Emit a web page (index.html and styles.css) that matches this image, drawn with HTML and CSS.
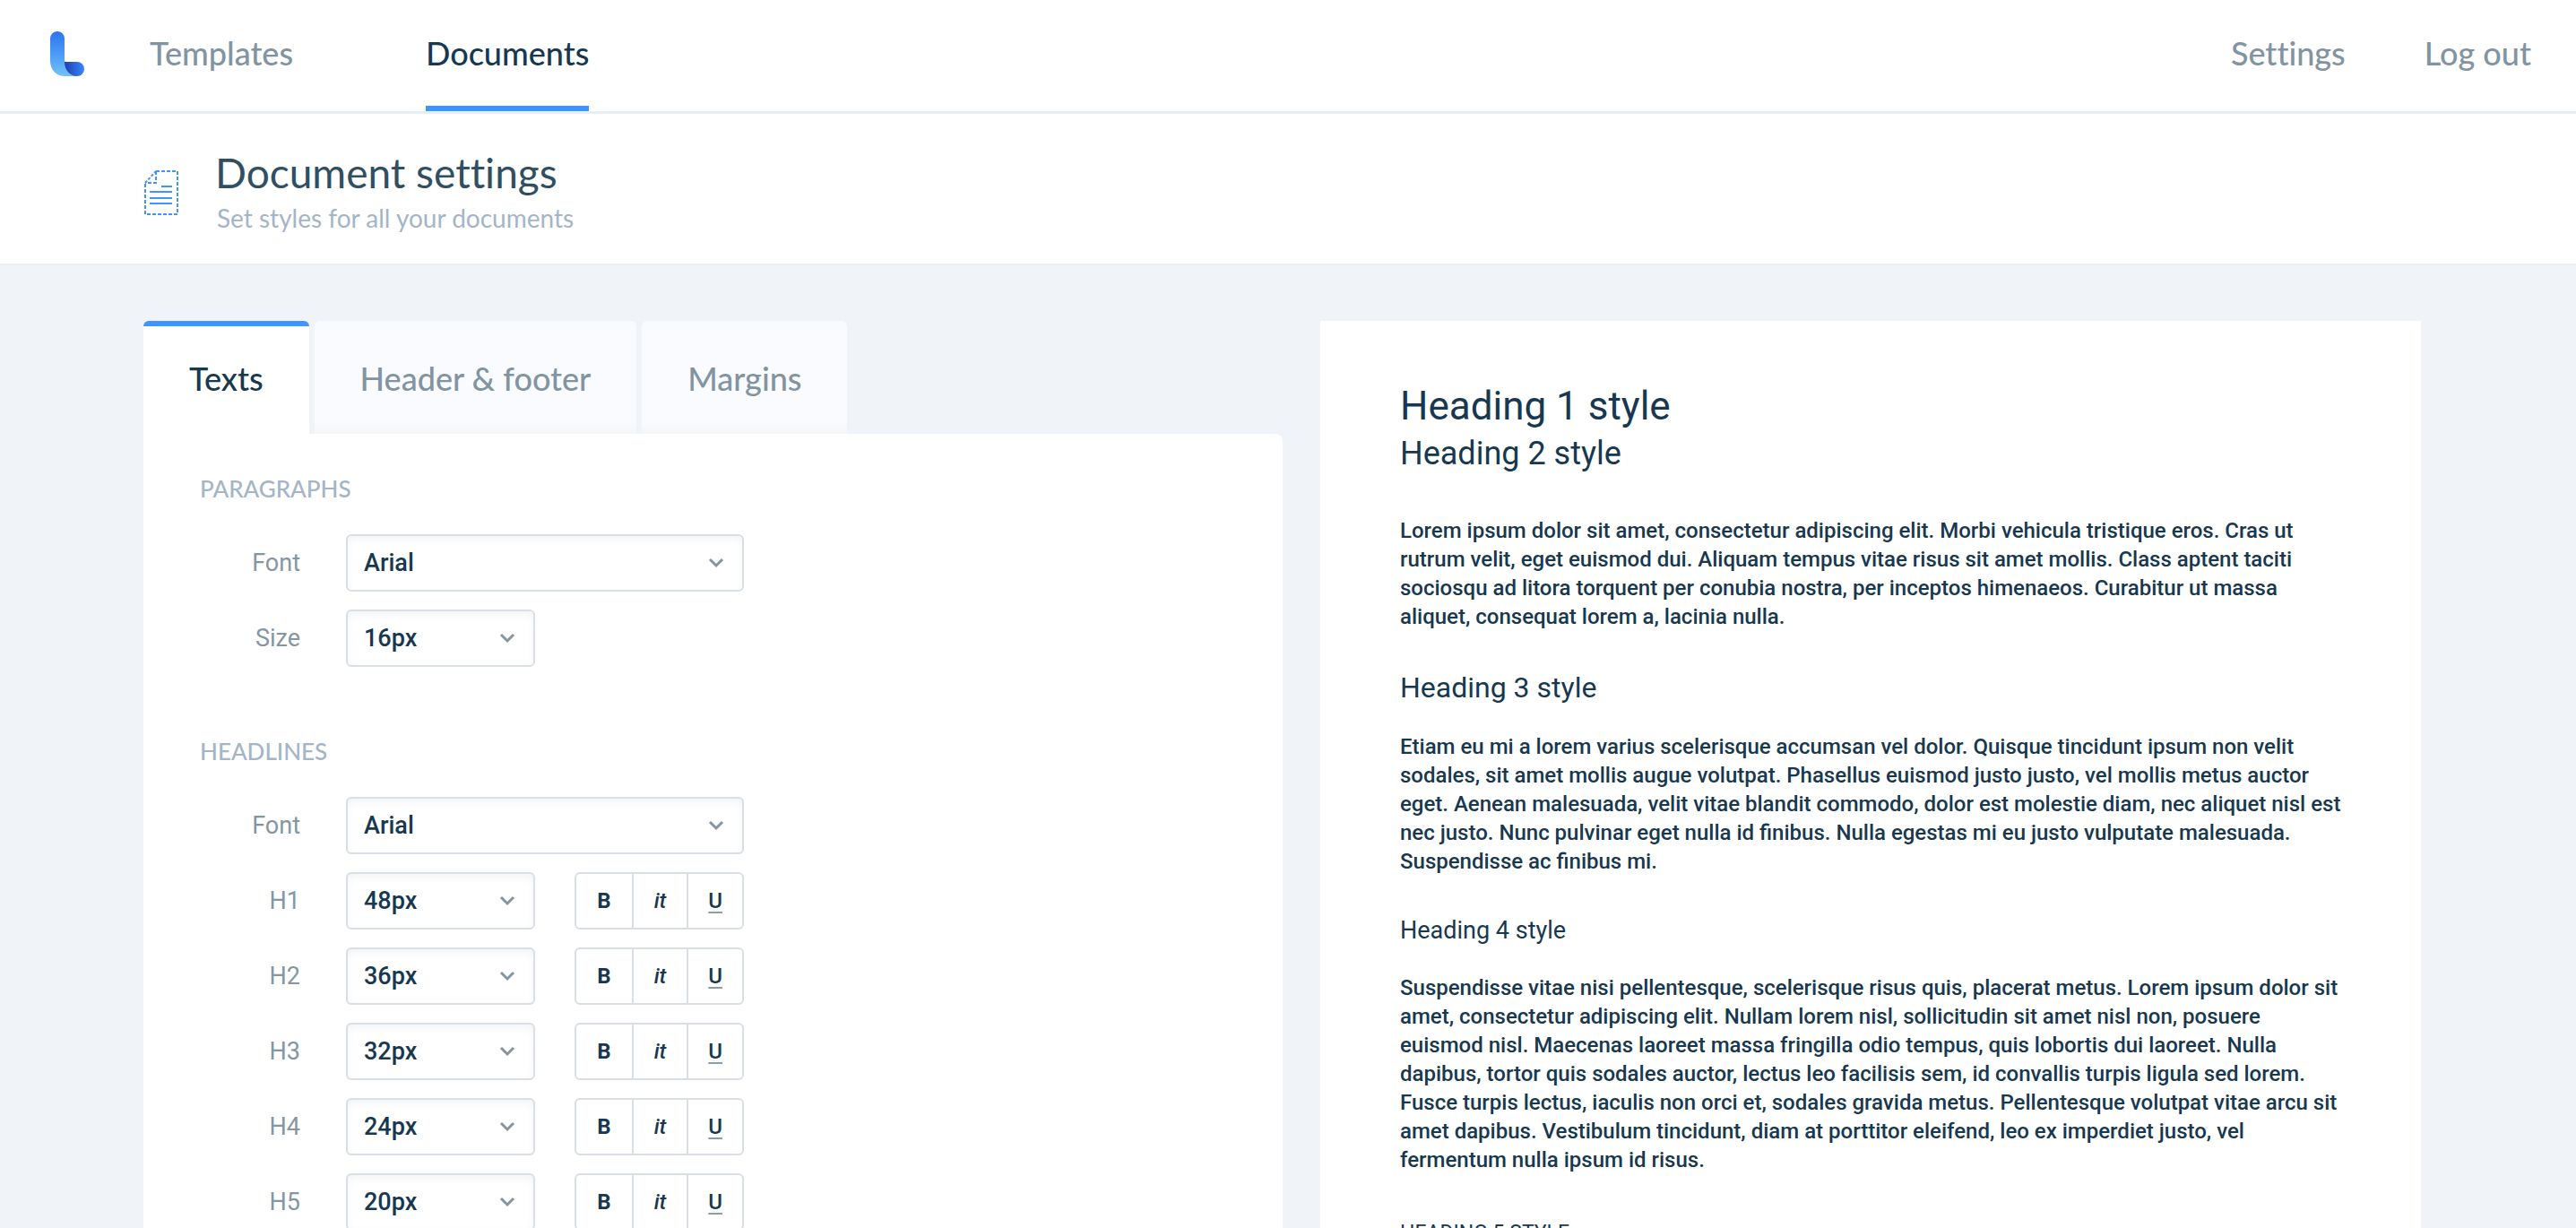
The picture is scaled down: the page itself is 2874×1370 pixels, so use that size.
FILE: index.html
```html
<!DOCTYPE html>
<html lang="en">
<head>
<meta charset="utf-8">
<title>Document settings</title>
<link rel="stylesheet" href="styles.css">
</head>
<body>
<div class="app">
  <header class="topbar">
    <a class="logo" href="#" aria-label="Home">
      <svg width="40" height="52" viewBox="0 0 40 52" aria-hidden="true">
        <defs>
          <linearGradient id="stem" x1="0" y1="0" x2="0" y2="1">
            <stop offset="0" stop-color="#2f74ec"/>
            <stop offset=".55" stop-color="#4e9ef8"/>
            <stop offset="1" stop-color="#74c2f6"/>
          </linearGradient>
          <linearGradient id="foot" x1="0" y1="0" x2="1" y2="0">
            <stop offset="0" stop-color="#1a3fb4"/>
            <stop offset="1" stop-color="#3b86f7"/>
          </linearGradient>
        </defs>
        <path d="M1 9a8 8 0 0 1 16 0v25l14 17H17C8 51 1 44 1 34z" fill="url(#stem)"/>
        <path d="M17 35h14a8 8 0 0 1 0 16c-8 0-14-7-14-16z" fill="url(#foot)"/>
      </svg>
    </a>
    <nav class="nav">
      <a class="nav-link" href="#">Templates</a>
      <a class="nav-link active" href="#" aria-current="page">Documents</a>
    </nav>
    <nav class="nav account">
      <a class="nav-link" href="#">Settings</a>
      <a class="nav-link" href="#">Log out</a>
    </nav>
  </header>

  <section class="page-head">
    <svg class="page-icon" width="40" height="52" viewBox="0 0 40 52" fill="none" stroke="#3f96fa" stroke-width="2" aria-hidden="true">
      <path d="M14 2h24v48H2V15" stroke-dasharray="4 2"/>
      <path d="M2 15L14 2" stroke-dasharray="3 2"/>
      <path d="M14 2v13H2" stroke-dasharray="4 2"/>
      <path d="M20 19h12M7 25h25M7 32h25M7 38h25"/>
    </svg>
    <div>
      <h1 class="page-title">Document settings</h1>
      <p class="page-sub">Set styles for all your documents</p>
    </div>
  </section>

  <main class="content">
    <section class="editor">
      <div class="tabs" role="tablist">
        <button class="tab active" type="button" role="tab" aria-selected="true">Texts</button>
        <button class="tab" type="button" role="tab" aria-selected="false">Header &amp; footer</button>
        <button class="tab" type="button" role="tab" aria-selected="false">Margins</button>
      </div>
      <form class="panel">
        <h2 class="group-title">Paragraphs</h2>
        <div class="rows">
          <div class="row">
            <label class="label" for="p-font">Font</label>
            <div class="field wide"><select id="p-font" class="select"><option>Arial</option></select><svg class="chevron" viewBox="0 0 18 12"><path d="M2 2l7 7 7-7"/></svg></div>
          </div>
          <div class="row">
            <label class="label" for="p-size">Size</label>
            <div class="field"><select id="p-size" class="select"><option>16px</option></select><svg class="chevron" viewBox="0 0 18 12"><path d="M2 2l7 7 7-7"/></svg></div>
          </div>
        </div>
        <h2 class="group-title">Headlines</h2>
        <div class="rows">
          <div class="row">
            <label class="label" for="h-font">Font</label>
            <div class="field wide"><select id="h-font" class="select"><option>Arial</option></select><svg class="chevron" viewBox="0 0 18 12"><path d="M2 2l7 7 7-7"/></svg></div>
          </div>
          <div class="row">
            <label class="label" for="h1-size">H1</label>
            <div class="field"><select id="h1-size" class="select"><option>48px</option></select><svg class="chevron" viewBox="0 0 18 12"><path d="M2 2l7 7 7-7"/></svg></div>
            <div class="styles"><button type="button" class="bold">B</button><button type="button" class="italic">it</button><button type="button" class="underline">U</button></div>
          </div>
          <div class="row">
            <label class="label" for="h2-size">H2</label>
            <div class="field"><select id="h2-size" class="select"><option>36px</option></select><svg class="chevron" viewBox="0 0 18 12"><path d="M2 2l7 7 7-7"/></svg></div>
            <div class="styles"><button type="button" class="bold">B</button><button type="button" class="italic">it</button><button type="button" class="underline">U</button></div>
          </div>
          <div class="row">
            <label class="label" for="h3-size">H3</label>
            <div class="field"><select id="h3-size" class="select"><option>32px</option></select><svg class="chevron" viewBox="0 0 18 12"><path d="M2 2l7 7 7-7"/></svg></div>
            <div class="styles"><button type="button" class="bold">B</button><button type="button" class="italic">it</button><button type="button" class="underline">U</button></div>
          </div>
          <div class="row">
            <label class="label" for="h4-size">H4</label>
            <div class="field"><select id="h4-size" class="select"><option>24px</option></select><svg class="chevron" viewBox="0 0 18 12"><path d="M2 2l7 7 7-7"/></svg></div>
            <div class="styles"><button type="button" class="bold">B</button><button type="button" class="italic">it</button><button type="button" class="underline">U</button></div>
          </div>
          <div class="row">
            <label class="label" for="h5-size">H5</label>
            <div class="field"><select id="h5-size" class="select"><option>20px</option></select><svg class="chevron" viewBox="0 0 18 12"><path d="M2 2l7 7 7-7"/></svg></div>
            <div class="styles"><button type="button" class="bold">B</button><button type="button" class="italic">it</button><button type="button" class="underline">U</button></div>
          </div>
        </div>
      </form>
    </section>

    <article class="preview">
      <h1>Heading 1 style</h1>
      <h2>Heading 2 style</h2>
      <p>Lorem ipsum dolor sit amet, consectetur adipiscing elit. Morbi vehicula tristique eros. Cras ut rutrum velit, eget euismod dui. Aliquam tempus vitae risus sit amet mollis. Class aptent taciti sociosqu ad litora torquent per conubia nostra, per inceptos himenaeos. Curabitur ut massa aliquet, consequat lorem a, lacinia nulla.</p>
      <h3>Heading 3 style</h3>
      <p>Etiam eu mi a lorem varius scelerisque accumsan vel dolor. Quisque tincidunt ipsum non velit sodales, sit amet mollis augue volutpat. Phasellus euismod justo justo, vel mollis metus auctor eget. Aenean malesuada, velit vitae blandit commodo, dolor est molestie diam, nec aliquet nisl est nec justo. Nunc pulvinar eget nulla id finibus. Nulla egestas mi eu justo vulputate malesuada. Suspendisse ac finibus mi.</p>
      <h4>Heading 4 style</h4>
      <p>Suspendisse vitae nisi pellentesque, scelerisque risus quis, placerat metus. Lorem ipsum dolor sit amet, consectetur adipiscing elit. Nullam lorem nisl, sollicitudin sit amet nisl non, posuere euismod nisl. Maecenas laoreet massa fringilla odio tempus, quis lobortis dui laoreet. Nulla dapibus, tortor quis sodales auctor, lectus leo facilisis sem, id convallis turpis ligula sed lorem. Fusce turpis lectus, iaculis non orci et, sodales gravida metus. Pellentesque volutpat vitae arcu sit amet dapibus. Vestibulum tincidunt, diam at porttitor eleifend, leo ex imperdiet justo, vel fermentum nulla ipsum id risus.</p>
      <h5>Heading 5 style</h5>
    </article>
  </main>
</div>
</body>
</html>
```
FILE: styles.css
```css
* {
  box-sizing: border-box;
  margin: 0;
}

body {
  background: #f0f3f8;
  color: #17384f;
  font-family: Roboto, "Liberation Sans", sans-serif;
}

.app {
  display: flex;
  flex-direction: column;
  height: 100vh;
  overflow: hidden;
}

/* Top navigation */
.topbar {
  display: flex;
  flex: none;
  align-items: stretch;
  height: 127px;
  padding: 0 50px 0 55px;
  background: #fff;
  border-bottom: 3px solid #e9eef2;
}

.logo {
  display: flex;
  align-items: center;
  width: 112px;
  padding-bottom: 4px;
}

.nav {
  display: flex;
  gap: 148px;
}

.account {
  gap: 88px;
  margin-left: auto;
}

.nav-link {
  padding-top: 38px;
  border-bottom: 6px solid transparent;
  color: #8294a2;
  font: 500 36px/42px Lato, sans-serif;
  font-variant-ligatures: none;
  text-decoration: none;
}

.nav-link.active {
  border-color: #3f96fa;
  color: #17384f;
}

/* Page heading */
.page-head {
  display: flex;
  flex: none;
  gap: 40px;
  height: 169px;
  padding: 36px 160px 0;
  background: #fff;
  border-bottom: 2px solid #e9eff3;
}

.page-icon {
  margin-top: 26px;
}

.page-title {
  color: #314f63;
  font: 400 46px/60px Lato, sans-serif;
  font-variant-ligatures: none;
}

.page-sub {
  padding-left: 2px;
  color: #a3b5c7;
  font: 400 28px/40px Lato, sans-serif;
}

/* Two columns */
.content {
  display: grid;
  flex: none;
  grid-template-columns: 1271fr 1228fr;
  gap: 42px;
  padding: 62px 173px 0 160px;
}

/* Tabs */
.tabs {
  display: flex;
  gap: 6px;
}

.tab {
  height: 126px;
  padding: 0 51px 4px;
  border: 0;
  border-top: 6px solid transparent;
  border-radius: 6px 6px 0 0;
  background: linear-gradient(#fafbfe 88%, #f5f6f8) border-box;
  color: #8294a2;
  font: 500 36px/42px Lato, sans-serif;
}

.tab.active {
  border-top-color: #3f96fa;
  background: #fff;
  color: #17384f;
}

/* Form */
.panel {
  min-height: 1000px;
  padding: 44px 63px;
  border-radius: 0 8px 0 0;
  background: #fff;
}

.group-title {
  color: #a3b5c7;
  font: 500 26px/34px Lato, sans-serif;
  text-transform: uppercase;
}

.rows {
  display: grid;
  gap: 20px;
  padding: 34px 0 77px;
}

.row {
  display: flex;
  align-items: center;
}

.label {
  width: 112px;
  margin-right: 51px;
  color: #8496a3;
  font-size: 27px;
  line-height: 34px;
  text-align: right;
}

.field {
  display: grid;
  align-items: center;
  width: 211px;
}

.field.wide {
  width: 444px;
}

.select,
.chevron {
  grid-area: 1 / 1;
}

.select {
  height: 64px;
  padding: 0 18px;
  appearance: none;
  border: 2px solid #d9dfe4;
  border-radius: 6px;
  background: #fff;
  box-shadow: inset 0 4px 10px #f3f4f5;
  color: #17384f;
  font: 500 27px/34px Roboto, sans-serif;
}

.chevron {
  justify-self: end;
  width: 18px;
  height: 12px;
  margin-right: 22px;
  fill: none;
  stroke: #8496a3;
  stroke-width: 3;
  pointer-events: none;
}

.styles {
  display: grid;
  grid-template-columns: repeat(3, 1fr);
  width: 189px;
  height: 64px;
  margin-left: 44px;
  border: 2px solid #d9dfe4;
  border-radius: 6px;
}

.styles button {
  padding: 0;
  border: 0;
  background: none;
  color: #17384f;
  font: 500 24px/32px Roboto, sans-serif;
}

.styles button + button {
  border-left: 2px solid #d9dfe4;
}

.styles .bold {
  font-weight: 700;
}

.styles .italic {
  font-style: italic;
}

.styles .underline {
  text-decoration: underline;
  text-decoration-color: #8b9ba7;
  text-underline-offset: 4px;
}

/* Live preview */
.preview {
  padding: 66px 88px 66px 89px;
  background: #fff;
}

.preview h1 {
  font-size: 44px;
  font-weight: 400;
  line-height: 58px;
}

.preview h2 {
  font-size: 36px;
  font-weight: 400;
  line-height: 48px;
}

.preview h3 {
  margin: 41px 0 28px;
  font-size: 32px;
  font-weight: 400;
  line-height: 44px;
}

.preview h4 {
  margin: 41px 0 28px;
  font-size: 27px;
  font-weight: 400;
  line-height: 40px;
}

.preview h5 {
  margin-top: 50px;
  font-size: 23px;
  font-weight: 400;
  line-height: 32px;
  text-transform: uppercase;
}

.preview p {
  font-size: 24px;
  font-weight: 500;
  line-height: 32px;
}

.preview h2 + p {
  margin-top: 46px;
}
```
